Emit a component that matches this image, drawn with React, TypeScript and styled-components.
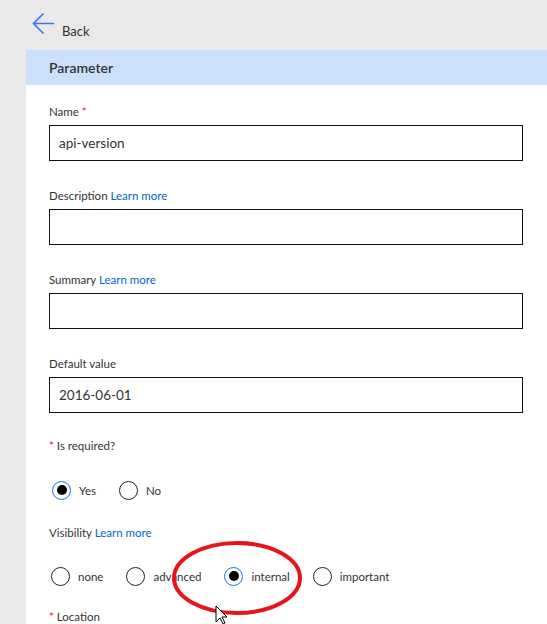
import React from "react";
import styled, { createGlobalStyle } from "styled-components";

const Global = createGlobalStyle`
  html, body { margin: 0; padding: 0; background: #e9e9e9; overflow: hidden; }
  body { font-family: "Segoe UI", Lato, "Open Sans", sans-serif; color: #333; }
`;

const Page = styled.div`
  position: relative;
  width: 547px;
  height: 624px;
  display: flex;
  flex-direction: column;
  overflow: hidden;
`;

const TopBar = styled.div`
  height: 50px;
  flex-shrink: 0;
  display: flex;
  align-items: flex-start;
  padding-left: 32px;
  box-sizing: border-box;
`;

const BackIcon = styled.svg`
  margin-top: 12px;
  width: 23px;
  height: 23px;
`;

const BackText = styled.span`
  margin-top: 22px;
  margin-left: 7px;
  font-size: 13px;
  line-height: 18px;
  color: #333;
`;

const Panel = styled.div`
  margin-left: 26px;
  flex: 1 0 auto;
  background: #fff;
`;

const Header = styled.div`
  height: 35px;
  background: #cce0fc;
  display: flex;
  align-items: center;
  padding-left: 23px;
  font-size: 14px;
  font-weight: 600;
  color: #333;
`;

const Body = styled.div`
  padding: 19px 24px 0 23px;
  display: flex;
  flex-direction: column;
`;

const Label = styled.div<{ $gap?: number }>`
  font-size: 11.5px;
  line-height: 16px;
  color: #333;
  margin-bottom: ${(p) => p.$gap ?? 5}px;
`;

const Req = styled.span`
  color: #e81123;
`;

const Link = styled.a`
  color: #0063d8;
  text-decoration: none;
`;

const Input = styled.div<{ $after?: number }>`
  height: 36px;
  box-sizing: border-box;
  border: 1px solid #111;
  display: flex;
  align-items: center;
  padding-left: 9px;
  font-size: 13.5px;
  color: #333;
  margin-bottom: ${(p) => p.$after ?? 27}px;
`;

const RadioRow = styled.div<{ $after: number; $indent: number }>`
  display: flex;
  align-items: center;
  gap: 23px;
  height: 20px;
  margin-bottom: ${(p) => p.$after}px;
  padding-left: ${(p) => p.$indent}px;
`;

const RadioItem = styled.div`
  display: flex;
  align-items: center;
  font-size: 11.5px;
  color: #333;
`;

const Circle = styled.span<{ $on?: boolean }>`
  width: 19px;
  height: 19px;
  box-sizing: border-box;
  border-radius: 50%;
  border: 1px solid ${(p) => (p.$on ? "#1a73e8" : "#222")};
  display: flex;
  align-items: center;
  justify-content: center;
  margin-right: 8px;
  &::after {
    content: "";
    display: ${(p) => (p.$on ? "block" : "none")};
    width: 10px;
    height: 10px;
    border-radius: 50%;
    background: #000;
  }
`;

const Overlay = styled.svg`
  position: absolute;
  left: 0;
  top: 0;
  pointer-events: none;
`;

const Radio = ({ on, label }: { on?: boolean; label: string }) => (
  <RadioItem>
    <Circle $on={on} />
    {label}
  </RadioItem>
);

export default function App() {
  return (
    <Page>
      <Global />
      <TopBar>
        <BackIcon viewBox="0 0 23 23">
          <path d="M22 11.5H1.5M11.5 1.5L1.5 11.5L11.5 21.5" fill="none" stroke="#3478f6" strokeWidth="1.6" />
        </BackIcon>
        <BackText>Back</BackText>
      </TopBar>
      <Panel>
        <Header>Parameter</Header>
        <Body>
          <Label>
            Name <Req>*</Req>
          </Label>
          <Input>api-version</Input>
          <Label>
            Description <Link>Learn more</Link>
          </Label>
          <Input />
          <Label>
            Summary <Link>Learn more</Link>
          </Label>
          <Input />
          <Label>Default value</Label>
          <Input $after={25}>2016-06-01</Input>
          <Label $gap={26}>
            <Req>*</Req> Is required?
          </Label>
          <RadioRow $after={25} $indent={3}>
            <Radio on label="Yes" />
            <Radio label="No" />
          </RadioRow>
          <Label $gap={25}>
            Visibility <Link>Learn more</Link>
          </Label>
          <RadioRow $after={23} $indent={2}>
            <Radio label="none" />
            <Radio label="advanced" />
            <Radio on label="internal" />
            <Radio label="important" />
          </RadioRow>
          <Label>
            <Req>*</Req> Location
          </Label>
        </Body>
      </Panel>
      <Overlay width="547" height="624" viewBox="0 0 547 624">
        <ellipse cx="237" cy="578" rx="63" ry="35" fill="none" stroke="#e8141c" strokeWidth="4" />
        <path d="M216 606 L216 622 L220 618 L223 624 L225 623 L222 617 L227 617 Z" fill="#fff" stroke="#000" strokeWidth="1" />
      </Overlay>
    </Page>
  );
}
